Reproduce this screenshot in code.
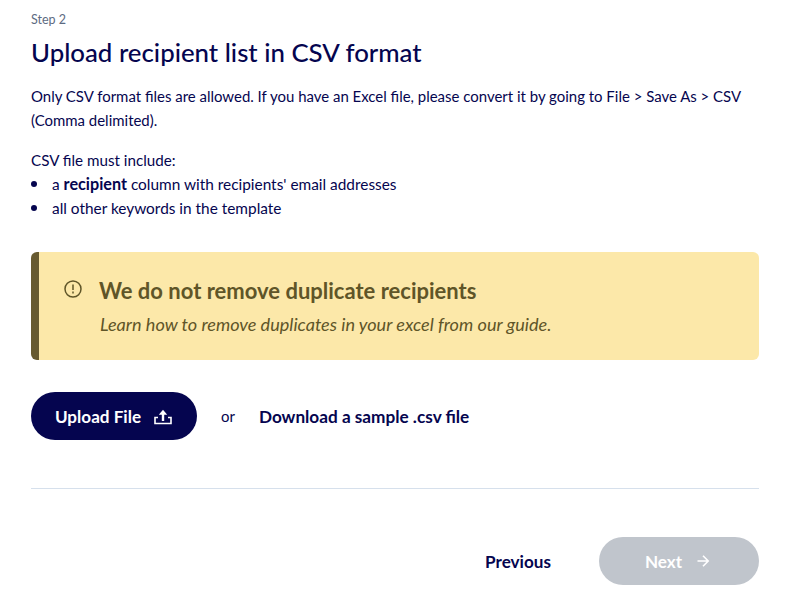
<div class="page">
  <div class="step">Step 2</div>
  <h1>Upload recipient list in CSV format</h1>
  <p class="intro">Only CSV format files are allowed. If you have an Excel file, please convert it by going to File &gt; Save As &gt; CSV (Comma delimited).</p>
  <p class="must">CSV file must include:</p>
  <ul>
    <li><span>a <b>recipient</b> column with recipients' email addresses</span></li>
    <li><span>all other keywords in the template</span></li>
  </ul>
  <div class="callout">
    <svg class="warn" viewBox="0 0 20 20" width="20" height="20" fill="none" stroke="currentColor" stroke-width="1.5"><circle cx="10" cy="10" r="8"/><path d="M10 5.6v5.4M10 12.6v1.8"/></svg>
    <div class="callout-body">
      <div class="callout-title">We do not remove duplicate recipients</div>
      <div class="callout-text">Learn how to remove duplicates in your excel from our guide.</div>
    </div>
  </div>
  <div class="actions">
    <button class="primary">Upload File
      <svg viewBox="0 0 20 20" width="20" height="20" fill="none" stroke="currentColor" stroke-width="1.6"><path d="M5 11.5H2v6h16v-6h-3"/><path d="M10 15V8" stroke-width="2.4"/><path d="M5.8 8.8 10 3.8l4.2 5z" fill="currentColor" stroke="none"/></svg>
    </button>
    <span class="or">or</span>
    <span class="link">Download a sample .csv file</span>
  </div>
  <hr />
  <div class="nav">
    <button class="ghost">Previous</button>
    <button class="next">Next
      <svg viewBox="0 0 20 20" width="20" height="20" fill="none" stroke="currentColor" stroke-width="1.6"><path d="M4.5 10h10.5M10 4.8l5.2 5.2-5.2 5.2"/></svg>
    </button>
  </div>
</div>

<style>
  :global(body) { margin: 0; background: #fff; }
  .page { box-sizing: border-box; width: 800px; height: 612px; padding: 12px 41px 0 31px; font-family: "Lato", sans-serif; font-size: 14.96px; line-height: 24px; color: #05054f; }
  .step { font-size: 12.5px; line-height: 16px; color: #5d6b82; }
  h1 { margin: 6px 0 0; font-size: 25.8px; line-height: 36px; font-weight: 500; color: #05054f; }
  .intro { margin: 14px 0 0; }
  .must { margin: 16px 0 0; font-size: 15.2px; }
  ul { margin: 0; padding: 0; list-style: none; font-size: 15.4px; }
  li { display: flex; align-items: center; }
  li::before { content: ""; flex: none; width: 6px; height: 6px; border-radius: 50%; background: #05054f; margin-right: 15px; }
  b { font-size: 16.2px; font-weight: 700; }
  .callout { box-sizing: border-box; margin-top: 32px; height: 108px; background: #fce8a9; border-left: 8px solid #675a30; border-radius: 6px; display: flex; gap: 16px; padding: 24px 0 0 24px; color: #5f5528; }
  .warn { margin-top: 3px; flex: none; }
  .callout-title { font-size: 22px; line-height: 30px; font-weight: 700; }
  .callout-text { font-size: 18.1px; line-height: 24px; font-style: italic; margin-top: 6px; padding-left: 1px; }
  .actions { display: flex; align-items: center; margin-top: 32px; height: 48px; }
  button { font-family: inherit; font-size: 17.1px; font-weight: 700; border: 0; display: inline-flex; align-items: center; justify-content: center; height: 48px; border-radius: 24px; padding: 0; }
  .primary { width: 166px; background: #05054f; color: #fff; gap: 12px; }
  .or { margin-left: 24px; }
  .link { margin-left: 24px; font-size: 17.2px; font-weight: 700; padding-top: 2px; }
  hr { border: 0; border-top: 1px solid #d6e0ec; margin: 48px 0 0; }
  .nav { display: flex; justify-content: flex-end; align-items: center; gap: 8px; margin-top: 48px; }
  .ghost { background: none; color: #05054f; width: 146px; }
  .next { width: 160px; background: #c0c5cc; color: #fff; gap: 11px; }
</style>
